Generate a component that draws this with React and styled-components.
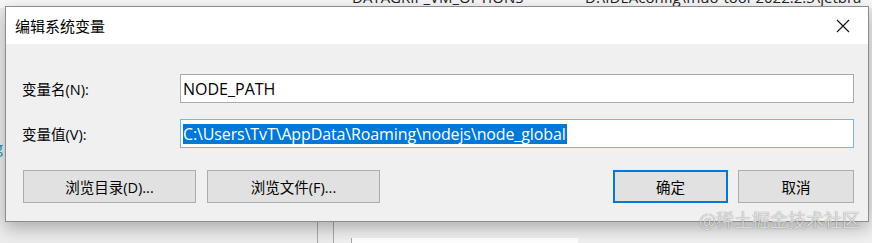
import React from "react";
import styled, { createGlobalStyle } from "styled-components";

const Global = createGlobalStyle`
  html, body { margin: 0; padding: 0; background: #ececec; }
  body { font-family: "Open Sans", "Noto Sans CJK SC", sans-serif; }
`;

const Stage = styled.div`
  position: relative;
  width: 872px;
  height: 243px;
  overflow: hidden;
  background: #ececec;
`;

/* window behind the dialog */
const BackWindow = styled.div`
  position: absolute;
  left: ${(p) => p.left}px;
  top: ${(p) => p.top}px;
  width: ${(p) => p.w}px;
  height: ${(p) => p.h}px;
  background: ${(p) => p.bg || "#f0f0f0"};
  border-left: 1px solid #a8a8a8;
`;

const BackText = styled.span`
  position: absolute;
  left: ${(p) => p.left}px;
  top: ${(p) => p.top}px;
  font-family: "Open Sans", sans-serif;
  font-size: 15px;
  color: ${(p) => p.color || "#222"};
  white-space: nowrap;
`;

const Dialog = styled.div`
  position: absolute;
  left: 5px;
  top: 6px;
  width: 864px;
  height: 216px;
  box-sizing: border-box;
  border: 1px solid #8c8c8c;
  background: #f0f0f0;
  display: flex;
  flex-direction: column;
  box-shadow: 0 6px 16px rgba(0, 0, 0, 0.28);
`;

const TitleBar = styled.div`
  height: 37px;
  flex: none;
  background: #fff;
  display: flex;
  align-items: center;
  justify-content: space-between;
  padding-left: 9px;
`;

const Title = styled.div`
  font-family: "Noto Sans CJK SC", sans-serif;
  font-size: 15px;
  color: #000;
`;

const Close = styled.div`
  width: 46px;
  height: 37px;
  display: flex;
  align-items: center;
  justify-content: center;
  margin-right: 2px;
`;

const Body = styled.div`
  flex: 1;
  display: flex;
  flex-direction: column;
  padding: 30px 14px 0 16px;
`;

const Row = styled.div`
  display: flex;
  align-items: center;
  margin-bottom: ${(p) => p.gap}px;
`;

const Label = styled.div`
  width: 158px;
  flex: none;
  font-family: "Open Sans", "Noto Sans CJK SC", sans-serif;
  font-size: 14.5px;
  color: #000;
`;

const Field = styled.div`
  flex: 1;
  height: 29px;
  box-sizing: border-box;
  background: #fff;
  border: 1px solid ${(p) => (p.focused ? "#7ab3e6" : "#a9a9a9")};
  display: flex;
  align-items: center;
  padding-left: 2px;
  font-family: "Open Sans", sans-serif;
  font-size: 16px;
  color: #000;
  white-space: nowrap;
`;

const Selected = styled.span`
  background: #0078d7;
  color: #fff;
  line-height: 20px;
  letter-spacing: -0.12px;
  padding-right: 1px;
`;

const Buttons = styled.div`
  display: flex;
  align-items: center;
  padding-left: 1px;
`;

const Group = styled.div`
  display: flex;
  gap: ${(p) => p.gap}px;
  margin-left: ${(p) => (p.right ? "auto" : "0")};
`;

const Button = styled.div`
  width: ${(p) => p.w}px;
  height: 33px;
  box-sizing: border-box;
  background: #e1e1e1;
  border: ${(p) => (p.primary ? "2px solid #0078d7" : "1px solid #adadad")};
  display: flex;
  align-items: center;
  justify-content: center;
  font-family: "Open Sans", "Noto Sans CJK SC", sans-serif;
  font-size: 14.5px;
  color: #000;
`;

const Watermark = styled.div`
  position: absolute;
  left: 699px;
  top: 206px;
  font-family: "Noto Sans CJK SC", sans-serif;
  font-size: 18px;
  color: rgba(255, 255, 255, 0.75);
  text-shadow: 0 0 1px rgba(0, 0, 0, 0.55);
  white-space: nowrap;
`;

function CloseIcon() {
  return (
    <svg width="14" height="14" viewBox="0 0 14 14">
      <path d="M1 1 L13 13 M13 1 L1 13" stroke="#111" strokeWidth="1.1" fill="none" />
    </svg>
  );
}

export default function App() {
  return (
    <Stage>
      <Global />
      <BackWindow left={-1} top={0} w={873} h={8} bg="#f7f7f7" />
      <BackText left={352} top={-13}>DATAGRIP_VM_OPTIONS</BackText>
      <BackText left={585} top={-13}>D:\IDEAconfig\fhuo-tool-2022.2.3\jetbra</BackText>
      <BackText left={-9} top={137} color="#1a9aa8">ig</BackText>
      <BackWindow left={317} top={210} w={600} h={40} bg="#ececec" />
      <BackWindow left={333} top={210} w={600} h={40} bg="#f0f0f0" />
      <BackWindow left={351} top={238} w={226} h={10} bg="#fff" />

      <Dialog>
        <TitleBar>
          <Title>编辑系统变量</Title>
          <Close>
            <CloseIcon />
          </Close>
        </TitleBar>
        <Body>
          <Row gap={16}>
            <Label>变量名(N):</Label>
            <Field>NODE_PATH</Field>
          </Row>
          <Row gap={22}>
            <Label>变量值(V):</Label>
            <Field focused>
              <Selected>C:\Users\TvT\AppData\Roaming\nodejs\node_global</Selected>
            </Field>
          </Row>
          <Buttons>
            <Group gap={11}>
              <Button w={173}>浏览目录(D)...</Button>
              <Button w={173}>浏览文件(F)...</Button>
            </Group>
            <Group gap={10} right>
              <Button w={115} primary>确定</Button>
              <Button w={116}>取消</Button>
            </Group>
          </Buttons>
        </Body>
      </Dialog>
      <Watermark>@稀土掘金技术社区</Watermark>
    </Stage>
  );
}
